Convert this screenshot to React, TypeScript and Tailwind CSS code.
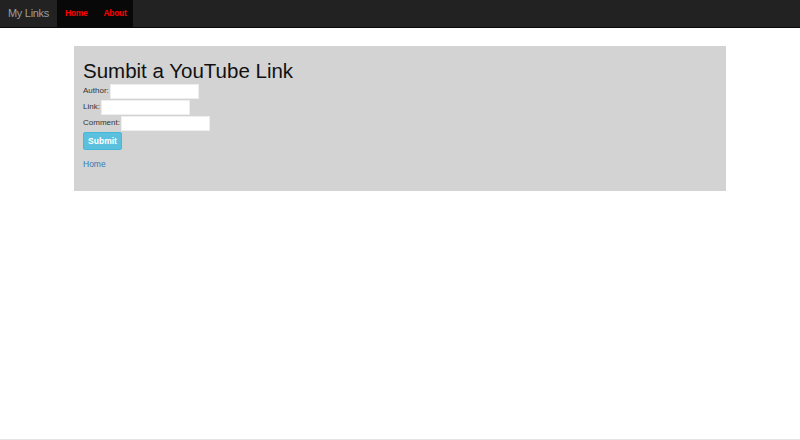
export default function App() {
  return (
    <div className="w-[800px] h-[440px] bg-white flex flex-col" style={{ fontFamily: '"Liberation Sans", Arial, sans-serif' }}>
      <nav className="h-[28px] bg-[#222222] border-b border-[#080808] flex items-stretch shrink-0">
        <div className="pl-[8px] pr-[8px] flex items-center text-[11px] tracking-[-0.3px] text-[#9d9d9d]">My Links</div>
        <ul className="flex items-stretch bg-[#080808]">
          <li className="flex items-center px-[8px] text-[8.5px] font-bold tracking-[-0.3px] text-[#ff0000]">Home</li>
          <li className="flex items-center pl-[8px] pr-[7px] text-[8.5px] font-bold tracking-[-0.3px] text-[#ff0000]">About</li>
        </ul>
      </nav>
      <main className="flex-1 pt-[18px] px-[74px]">
        <div className="bg-[#d3d3d3] h-[145px] px-[9px] pt-[12px]">
          <h1 className="text-[20.5px] leading-[25px] text-[#111]">Sumbit a YouTube Link</h1>
          <form className="flex flex-col text-[8px] text-[#333]">
            <label className="flex items-center h-[16px]">
              Author: <input className="ml-[1px] w-[89px] h-[15px] bg-white border border-[#eee]" />
            </label>
            <label className="flex items-center h-[16px]">
              Link: <input className="ml-[1px] w-[89px] h-[15px] bg-white border border-[#eee]" />
            </label>
            <label className="flex items-center h-[16px]">
              Comment: <input className="ml-[1px] w-[89px] h-[15px] bg-white border border-[#eee]" />
            </label>
            <div className="mt-[1px]">
              <button type="button" className="w-[39px] h-[18px] bg-[#5bc0de] border border-[#46b8da] rounded-[2px] text-white font-bold text-[8.5px]">Submit</button>
            </div>
            <a className="mt-[8px] text-[8.5px] text-[#337ab7]">Home</a>
          </form>
        </div>
      </main>
      <div className="h-[1px] bg-[#e5e5e5]" />
    </div>
  );
}
